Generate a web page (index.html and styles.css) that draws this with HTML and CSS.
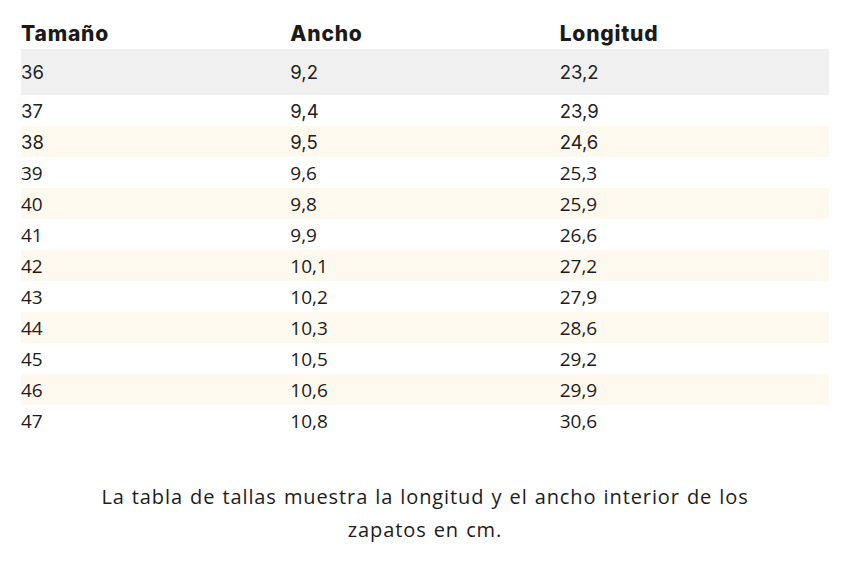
FILE: index.html
```html
<!DOCTYPE html>
<html lang="es">
<head>
<meta charset="utf-8">
<title>Tabla de tallas</title>
<link rel="stylesheet" href="styles.css">
</head>
<body>
<div class="wrap">
  <table class="sizes">
    <thead>
      <tr><th>Tamaño</th><th>Ancho</th><th>Longitud</th></tr>
    </thead>
    <tbody>
      <tr class="first alt-font"><td>36</td><td>9,2</td><td>23,2</td></tr>
      <tr class="alt-font"><td>37</td><td>9,4</td><td>23,9</td></tr>
      <tr class="cream alt-font"><td>38</td><td>9,5</td><td>24,6</td></tr>
      <tr><td>39</td><td>9,6</td><td>25,3</td></tr>
      <tr class="cream"><td>40</td><td>9,8</td><td>25,9</td></tr>
      <tr><td>41</td><td>9,9</td><td>26,6</td></tr>
      <tr class="cream"><td>42</td><td>10,1</td><td>27,2</td></tr>
      <tr><td>43</td><td>10,2</td><td>27,9</td></tr>
      <tr class="cream"><td>44</td><td>10,3</td><td>28,6</td></tr>
      <tr><td>45</td><td>10,5</td><td>29,2</td></tr>
      <tr class="cream"><td>46</td><td>10,6</td><td>29,9</td></tr>
      <tr><td>47</td><td>10,8</td><td>30,6</td></tr>
    </tbody>
  </table>
  <p class="note">La tabla de tallas muestra la longitud y el ancho interior de los zapatos en cm.</p>
</div>
</body>
</html>
```
FILE: styles.css
```css
html, body {
  margin: 0;
  padding: 0;
  background: #ffffff;
}

body {
  font-family: "Open Sans", "Noto Sans", sans-serif;
  color: #1c1c1c;
}

.wrap {
  width: 808px;
  padding: 18px 0 0 21px;
}

.sizes {
  width: 808px;
  table-layout: fixed;
  border-collapse: collapse;
}

.sizes th,
.sizes td {
  padding: 0;
  height: 31px;
  text-align: left;
  vertical-align: middle;
}

.sizes th {
  font-family: "Inter", sans-serif;
  font-weight: 800;
  font-size: 21px;
  color: #1a1a1a;
  letter-spacing: 0.8px;
}

.sizes td {
  font-size: 19px;
  font-weight: 500;
}

.sizes .alt-font td {
  font-family: "Inter", sans-serif;
  font-size: 18.5px;
  font-weight: 400;
  color: #222222;
}

.sizes .first td {
  height: 46px;
  background: #f0f0f0;
}

.sizes .cream td {
  background: #fef9ee;
}

.note {
  margin: 44px auto 0;
  width: 700px;
  text-align: center;
  font-size: 20px;
  line-height: 33px;
  letter-spacing: 0.9px;
  word-spacing: 1px;
  color: #1c1c1c;
}
```
